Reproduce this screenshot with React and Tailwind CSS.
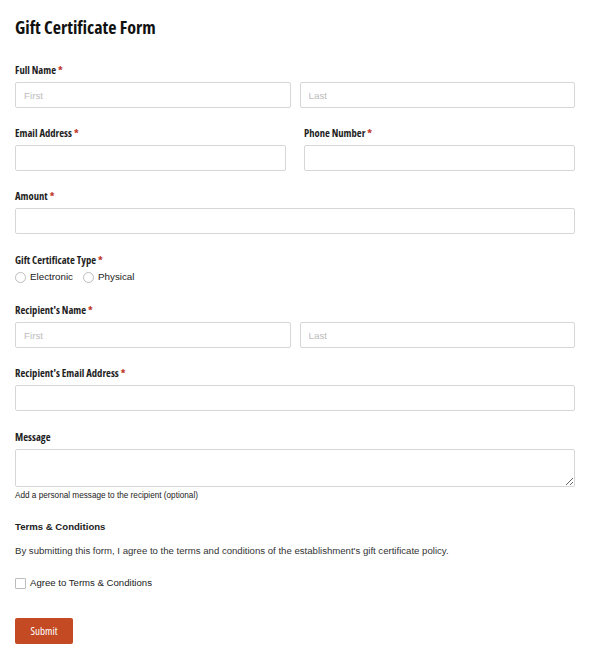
import React from "react";

const cond = "font-['Open_Sans',sans-serif] [font-stretch:75%]";
const body = "font-['Liberation_Sans',Arial,sans-serif]";

function Label({ children, req }) {
  return (
    <div className={`${cond} h-[16px] text-[10.6px] leading-[16px] font-bold text-[#1f1f1f] mb-[4px] whitespace-nowrap`}>
      {children}
      {req && <span className="text-[#c0392b] ml-[2px]">*</span>}
    </div>
  );
}

function Input({ placeholder = "" }) {
  return (
    <input
      className={`${body} block w-full h-[26px] border border-[#d6d6d6] rounded-[2px] px-[8px] text-[9.8px] text-[#333] placeholder:text-[#bdbdbd] outline-none bg-white`}
      placeholder={placeholder}
    />
  );
}

function Radio({ label }) {
  return (
    <label className="flex items-center gap-[4px]">
      <span className="w-[11px] h-[11px] rounded-full border border-[#bdbdbd] bg-white" />
      <span className={`${body} text-[9.8px] text-[#222]`}>{label}</span>
    </label>
  );
}

export default function App() {
  return (
    <div className="w-[590px] min-h-[659px] bg-white px-[15px] pt-[14px]">
      <h1 className={`${cond} text-[18px] leading-[26px] font-bold text-[#111]`}>Gift Certificate Form</h1>

      <div className="mt-[22px]">
        <Label req>Full Name</Label>
        <div className="grid grid-cols-2 gap-[9px]">
          <Input placeholder="First" />
          <Input placeholder="Last" />
        </div>
      </div>

      <div className="mt-[17px] grid grid-cols-2 gap-[18px]">
        <div>
          <Label req>Email Address</Label>
          <Input />
        </div>
        <div>
          <Label req>Phone Number</Label>
          <Input />
        </div>
      </div>

      <div className="mt-[17px]">
        <Label req>Amount</Label>
        <Input />
      </div>

      <div className="mt-[18px]">
        <Label req>Gift Certificate Type</Label>
        <div className="flex items-center gap-[10px] h-[16px] mt-[-3px]">
          <Radio label="Electronic" />
          <Radio label="Physical" />
        </div>
      </div>

      <div className="mt-[17px]">
        <Label req>Recipient's Name</Label>
        <div className="grid grid-cols-2 gap-[9px]">
          <Input placeholder="First" />
          <Input placeholder="Last" />
        </div>
      </div>

      <div className="mt-[17px]">
        <Label req>Recipient's Email Address</Label>
        <Input />
      </div>

      <div className="mt-[18px]">
        <Label>Message</Label>
        <textarea className={`${body} block w-full h-[38px] border border-[#d6d6d6] rounded-[2px] px-[8px] py-[4px] text-[9.8px] outline-none resize-y`} />
        <div className={`${body} text-[8.2px] leading-[12px] text-[#222] mt-[3px]`}>Add a personal message to the recipient (optional)</div>
      </div>

      <div className={`${body} mt-[18px] text-[9.6px] leading-[14px] font-bold text-[#222]`}>Terms &amp; Conditions</div>
      <p className={`${body} mt-[10px] text-[9.6px] leading-[14px] text-[#333]`}>
        By submitting this form, I agree to the terms and conditions of the establishment's gift certificate policy.
      </p>

      <label className="mt-[18px] flex items-center gap-[4px] h-[14px]">
        <span className="w-[11px] h-[11px] border border-[#bdbdbd] rounded-[1px] bg-white" />
        <span className={`${body} text-[9.6px] text-[#222]`}>Agree to Terms &amp; Conditions</span>
      </label>

      <button className={`${cond} mt-[28px] w-[58px] h-[26px] rounded-[2px] bg-[#c44a24] text-white text-[11px] font-normal`}>
        Submit
      </button>
    </div>
  );
}
